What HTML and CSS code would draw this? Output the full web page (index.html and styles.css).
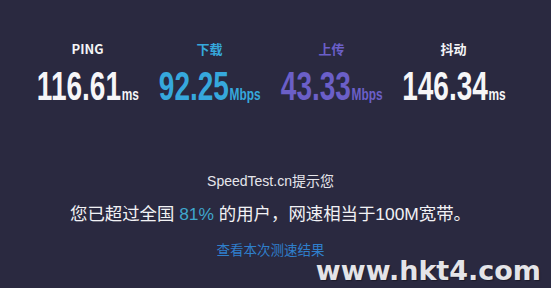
FILE: index.html
```html
<!DOCTYPE html>
<html lang="zh-CN">
<head>
<meta charset="utf-8">
<title>SpeedTest</title>
<link rel="stylesheet" href="styles.css">
</head>
<body>
<div class="page">
  <div class="stats">
    <div class="stat">
      <div class="label">PING</div>
      <div class="value"><span class="num">116.61</span><span class="unit">ms</span></div>
    </div>
    <div class="stat down">
      <div class="label">下载</div>
      <div class="value"><span class="num">92.25</span><span class="unit">Mbps</span></div>
    </div>
    <div class="stat up">
      <div class="label">上传</div>
      <div class="value"><span class="num">43.33</span><span class="unit">Mbps</span></div>
    </div>
    <div class="stat">
      <div class="label">抖动</div>
      <div class="value"><span class="num">146.34</span><span class="unit">ms</span></div>
    </div>
  </div>
  <div class="message">
    <div class="hint">SpeedTest.cn提示您</div>
    <div class="result">您已超过全国 <span class="pct">81%</span> 的用户，网速相当于100M宽带。</div>
    <a class="link" href="#">查看本次测速结果</a>
  </div>
  <div class="watermark">www.hkt4.com</div>
</div>
</body>
</html>
```
FILE: styles.css
```css
html, body {
  margin: 0;
  padding: 0;
  background: #2a2940;
}
body {
  width: 551px;
  height: 288px;
  overflow: hidden;
  font-family: "Liberation Sans", "Noto Sans CJK SC", sans-serif;
  color: #f1f1f4;
}
.page {
  position: relative;
  width: 551px;
  height: 288px;
}
.stats {
  display: grid;
  grid-template-columns: repeat(4, 122px);
  justify-content: center;
  width: 541px;
  padding-top: 41px;
}
.stat {
  display: flex;
  flex-direction: column;
  align-items: center;
}
.label {
  font-family: "Noto Sans CJK SC", sans-serif;
  font-weight: 700;
  font-size: 13px;
  line-height: 16px;
  height: 16px;
  color: #f4f4f6;
}
.value {
  margin-top: 8px;
  height: 42px;
  font-family: "Liberation Sans", sans-serif;
  font-weight: 700;
  font-size: 40px;
  line-height: 42px;
  white-space: nowrap;
  transform: scaleX(0.7);
  transform-origin: center;
  color: #f6f6f8;
}
.num {
  font-size: 40px;
}
.unit {
  font-size: 17px;
  line-height: 17px;
  margin-left: 1px;
}
.down .label, .down .value { color: #36a8dc; }
.up .label, .up .value { color: #6b5fc8; }
.message {
  width: 541px;
  margin-top: 64px;
  display: flex;
  flex-direction: column;
  align-items: center;
}
.hint {
  font-size: 14px;
  line-height: 20px;
  color: #e6e6ec;
}
.result {
  margin-top: 11px;
  font-size: 17.4px;
  line-height: 24px;
  color: #f2f2f5;
}
.pct {
  color: #3fa6cc;
}
.link {
  margin-top: 15px;
  font-size: 13.5px;
  line-height: 20px;
  color: #2f7fcc;
  text-decoration: none;
}
.watermark {
  position: absolute;
  right: 10px;
  bottom: 2px;
  font-family: "DejaVu Sans", sans-serif;
  font-weight: 700;
  font-size: 27px;
  line-height: 30px;
  color: #e4e4e8;
  text-shadow: 1px 1px 1px rgba(0,0,0,0.35);
}
```
